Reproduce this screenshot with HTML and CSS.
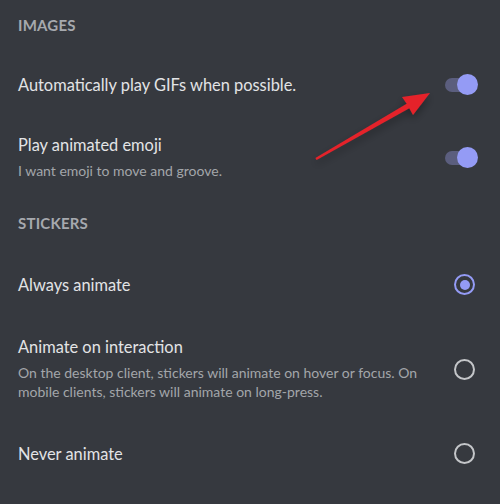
FILE: index.html
```html
<!DOCTYPE html>
<html>
<head>
<meta charset="utf-8">
<link rel="stylesheet" href="styles.css">
</head>
<body>
<div class="page">
  <div class="header first">IMAGES</div>
  <div class="row">
    <div class="text"><div class="title">Automatically play GIFs when possible.</div></div>
    <div class="toggle"><span class="track"></span><span class="knob"></span></div>
  </div>
  <div class="row">
    <div class="text">
      <div class="title">Play animated emoji</div>
      <div class="desc">I want emoji to move and groove.</div>
    </div>
    <div class="toggle"><span class="track"></span><span class="knob"></span></div>
  </div>
  <div class="header">STICKERS</div>
  <div class="row sticker">
    <div class="text"><div class="title">Always animate</div></div>
    <div class="radio selected"><span class="dot"></span></div>
  </div>
  <div class="row sticker">
    <div class="text">
      <div class="title">Animate on interaction</div>
      <div class="desc wide">On the desktop client, stickers will animate on hover or focus. On mobile clients, stickers will animate on long-press.</div>
    </div>
    <div class="radio"></div>
  </div>
  <div class="row sticker">
    <div class="text"><div class="title">Never animate</div></div>
    <div class="radio"></div>
  </div>
  <svg class="arrow" width="500" height="504" viewBox="0 0 500 504">
    <defs>
      <filter id="sh" x="-20%" y="-20%" width="140%" height="140%">
        <feDropShadow dx="0" dy="4" stdDeviation="4" flood-color="#000" flood-opacity="0.35"/>
      </filter>
    </defs>
    <polygon filter="url(#sh)" fill="#e5242a" points="315.4,157.9 406.7,103.8 402,97 430,93 413,115 409.3,108.2 316.6,160.1"/>
  </svg>
</div>
</body>
</html>
```
FILE: styles.css
```css
html, body {
  margin: 0;
  padding: 0;
  background: #36393f;
}
.page {
  position: relative;
  width: 500px;
  height: 504px;
  overflow: hidden;
  font-family: Lato, "Noto Sans", sans-serif;
}
.header {
  padding: 13px 18px 20px;
  font-size: 15px;
  line-height: 20px;
  font-weight: 700;
  color: #a6a9ae;
  letter-spacing: 0.2px;
}
.header.first {
  padding-top: 15px;
  padding-bottom: 19px;
}
.row {
  display: flex;
  align-items: center;
  justify-content: space-between;
  padding: 20px 22px 20px 18px;
}
.row.sticker {
  padding-top: 21px;
  padding-bottom: 21px;
}
.title {
  font-size: 16.4px;
  line-height: 20px;
  color: #e3e4e6;
}
.desc {
  margin-top: 6px;
  font-size: 14px;
  line-height: 19px;
  color: #a3a6aa;
}
.desc.wide {
  max-width: 420px;
}
.toggle {
  position: relative;
  width: 33px;
  height: 21px;
  flex: none;
}
.track {
  position: absolute;
  left: 0;
  top: 3.5px;
  width: 28px;
  height: 14px;
  border-radius: 7px;
  background: #5b5e7e;
}
.knob {
  position: absolute;
  right: 0;
  top: 0;
  width: 21px;
  height: 21px;
  border-radius: 50%;
  background: #949bf5;
}
.radio {
  flex: none;
  box-sizing: border-box;
  width: 21px;
  height: 21px;
  margin-right: 3px;
  border: 2px solid #c4c6c9;
  border-radius: 50%;
  display: flex;
  align-items: center;
  justify-content: center;
}
.radio.selected {
  border-color: #949bf5;
}
.dot {
  width: 10px;
  height: 10px;
  border-radius: 50%;
  background: #949bf5;
}
.arrow {
  position: absolute;
  left: 0;
  top: 0;
  pointer-events: none;
}
```
